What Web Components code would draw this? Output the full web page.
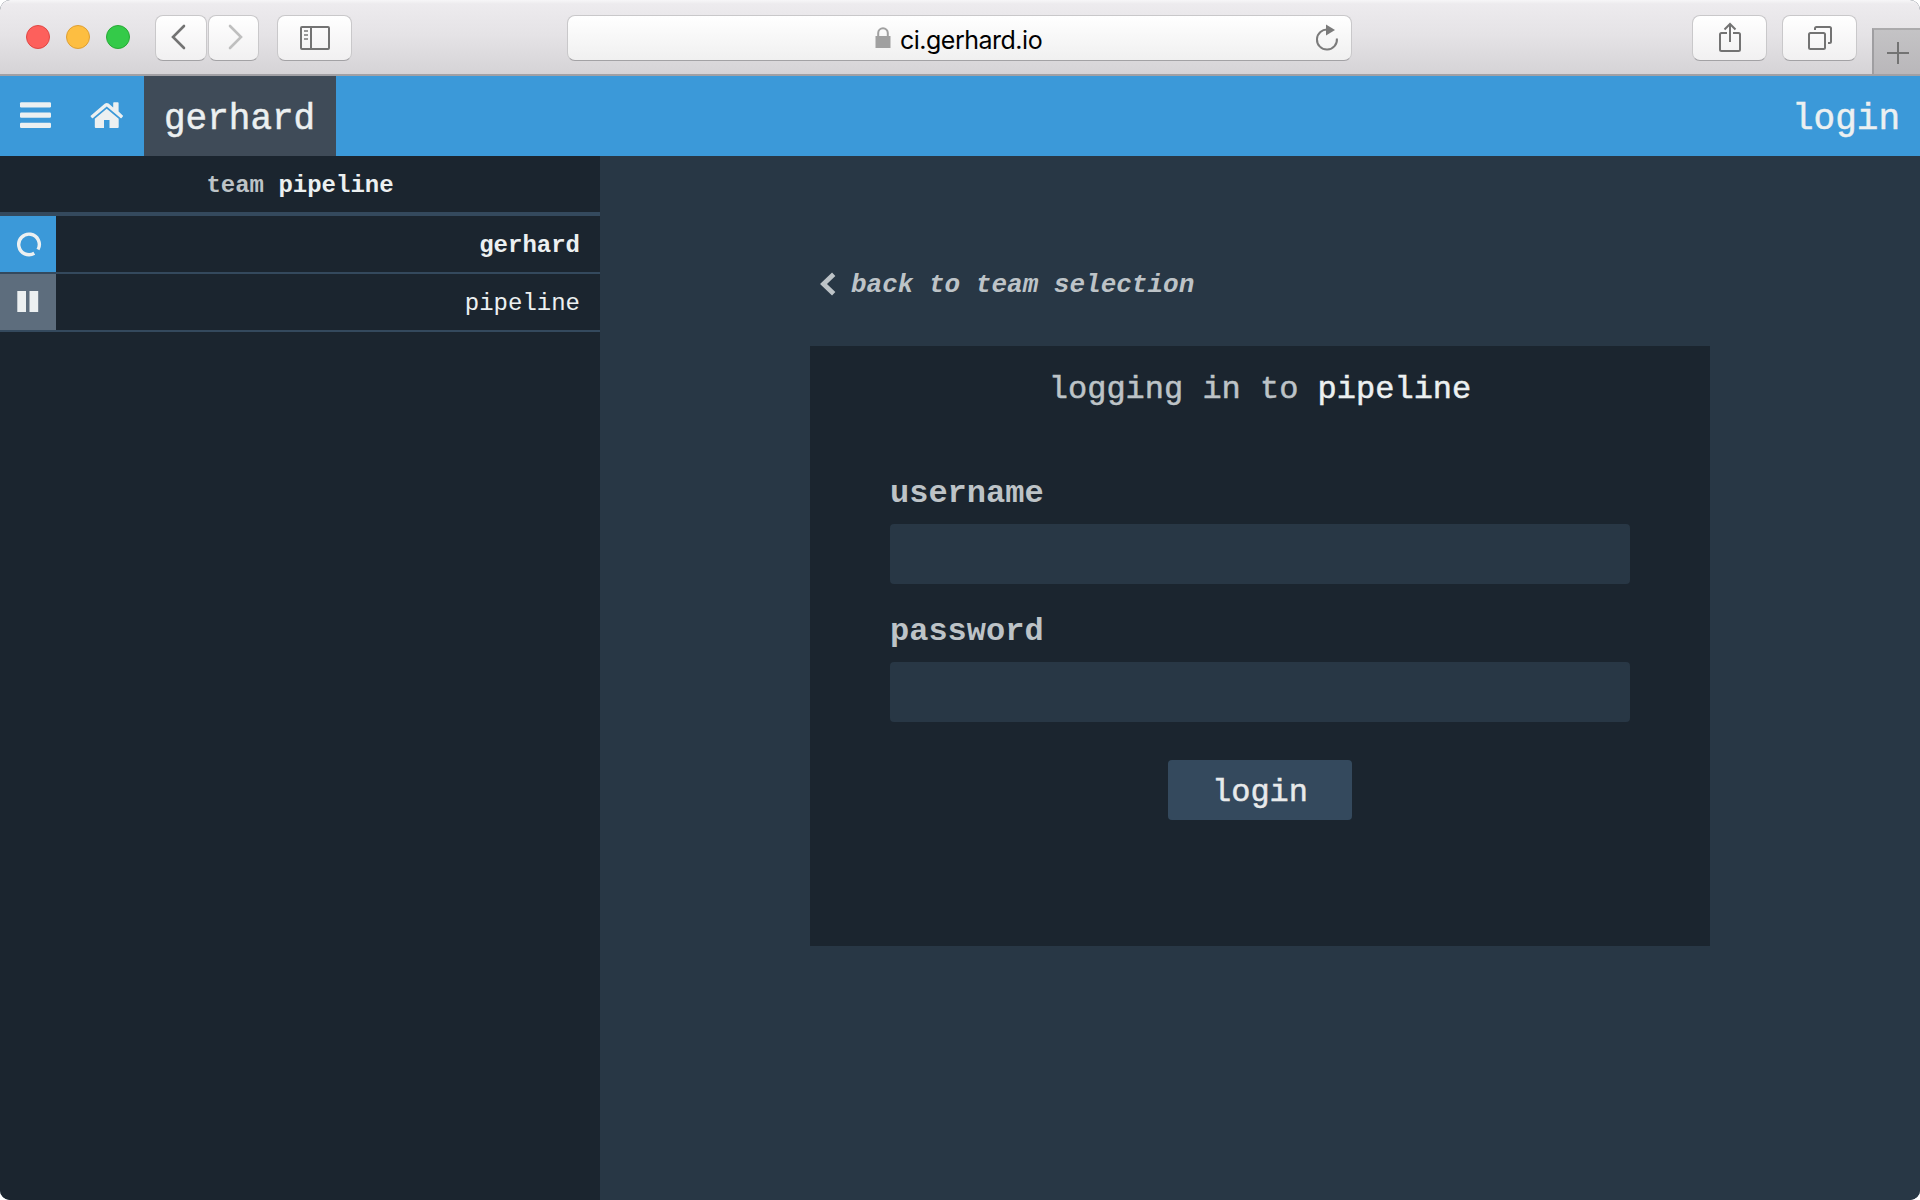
<!DOCTYPE html>
<html lang="en">
<head>
<meta charset="utf-8">
<title>ci.gerhard.io</title>
<style>
html,body{margin:0;height:100%;background:#fff;overflow:hidden}
body{font-family:"Liberation Mono",monospace;color:#ecf0f1}
</style>
</head>
<body>
<browser-window>
  <browser-toolbar slot="chrome" address="ci.gerhard.io"></browser-toolbar>
  <ci-topbar pipeline="gerhard"></ci-topbar>
  <ci-sidebar>
    <team-group name="pipeline">
      <pipeline-row state="running" current>gerhard</pipeline-row>
      <pipeline-row state="paused">pipeline</pipeline-row>
    </team-group>
  </ci-sidebar>
  <login-view team="pipeline"></login-view>
</browser-window>
<script>
const define = (name, render) => customElements.define(name, class extends HTMLElement {
  constructor() {
    super();
    this.attachShadow({ mode: 'open' });
  }
  connectedCallback() {
    this.shadowRoot.innerHTML = '<style>*{box-sizing:border-box}</style>' + render(this);
  }
});

define('browser-window', () => `
<style>
:host{display:grid;width:1920px;height:1200px;grid-template:76px 80px 1fr / 600px 1fr;border-radius:10px;overflow:hidden;background:#283745}
slot[name=chrome]::slotted(*){grid-column:1/3}
::slotted(ci-topbar){grid-column:1/3}
</style><slot name="chrome"></slot><slot></slot>`);

define('chrome-button', el => `
<style>
:host{display:flex;flex:none;box-sizing:border-box;width:${el.getAttribute('width')}px;height:46px;border:1px solid #c9c8ca;border-bottom-color:#a3a2a5;border-radius:8px;background:linear-gradient(#fff,#f1f0f1);align-items:center;justify-content:center}
</style><slot></slot>`);

define('address-field', () => `
<style>
:host{display:flex;flex:none;box-sizing:border-box;width:785px;height:46px;border:1px solid #c9c8ca;border-bottom-color:#a3a2a5;border-radius:8px;background:linear-gradient(#fff,#f0f0f0);align-items:center;padding:0 11px 0 307px;color:#000}
.url{flex:1;margin-left:9px;font:25px/43px Inter,sans-serif;letter-spacing:-.5px;padding-top:3px;height:44px}
svg{display:block;flex:none}
</style>
<svg width="16" height="22" viewBox="0 0 16 22"><path d="M3.200 10V6a4.800 4.800 0 0 1 9.600 0v4" fill="none" stroke="#a0a0a0" stroke-width="2"/><path d="M.5 9h15v12H.5z" fill="#a0a0a0"/></svg>
<span class="url"><slot></slot></span>
<svg width="26" height="30" viewBox="0 0 26 30"><path d="M22.900 15.500A10 10 0 1 1 14 6.600" fill="none" stroke="#7b7b7b" stroke-width="2"/><path d="M12 1.500 21 7l-9 5.500z" fill="#7b7b7b"/></svg>`);

define('browser-toolbar', el => `
<style>
:host{display:flex;height:76px;background:linear-gradient(#f7f6f8 0,#edebee 4px,#e5e3e6 35px,#d5d3d6 74px);border-bottom:2px solid #a1a0a4;box-sizing:border-box;padding:15px 0 0 26px;align-items:flex-start}
.lights{display:flex;flex:none;gap:16px;margin:10px 25px 0 0}
.lights i{width:24px;height:24px;border-radius:50%;border:1px solid #df4744;background:#fd605c}
.lights i+i{border-color:#de9f34;background:#fdbe41}
.lights i+i+i{border-color:#28a936;background:#34ca49}
.history{display:flex;gap:1px;margin-right:18px}
address-field{margin:0 340px 0 215px}
.right{display:flex;gap:15px}
.plus{display:flex;flex:none;width:48px;height:46px;margin:13px 0 0 15px;border-left:2px solid #9f9ea1;border-top:2px solid #abaaac;background:linear-gradient(#c4c3c5,#b9b7ba);align-items:center;justify-content:center}
svg{display:block;fill:none;stroke:#737373;stroke-width:2}
</style>
<div class="lights"><i></i><i></i><i></i></div>
<div class="history">
<chrome-button width="52"><svg width="16" height="26" viewBox="0 0 16 26" style="stroke-width:2.6;margin:0 6px 2px 0"><path d="M14 2 3 13l11 11" stroke-linecap="round"/></svg></chrome-button>
<chrome-button width="51"><svg width="16" height="26" viewBox="0 0 16 26" style="stroke-width:2.6;stroke:#bfbfbf;margin:0 0 2px 4px"><path d="m2 2 11 11L2 24" stroke-linecap="round"/></svg></chrome-button>
</div>
<chrome-button width="75"><svg width="30" height="24" viewBox="0 0 30 24"><rect x="1" y="1" width="28" height="22" rx="1"/><path d="M11 1v22"/><path d="M4 5h4M4 9h4M4 13h4" stroke="#999"/></svg></chrome-button>
<address-field>${el.getAttribute('address')}</address-field>
<div class="right">
<chrome-button width="75"><svg width="22" height="30" viewBox="0 0 22 30" style="margin-bottom:2px"><path d="M8 11H2.500Q1 11 1 12.500v15Q1 29 2.500 29h17q1.500 0 1.500-1.500v-15Q21 11 19.500 11H14M11 20V2M5.500 7.500 11 2l5.500 5.500"/></svg></chrome-button>
<chrome-button width="75"><svg width="24" height="24" viewBox="0 0 24 24"><rect x="1" y="7" width="16" height="16" rx="1.500"/><path d="M7 4V2.500Q7 1 8.500 1h13Q23 1 23 2.500v13Q23 17 21.500 17H20"/></svg></chrome-button>
</div>
<div class="plus"><svg width="22" height="22" viewBox="0 0 22 22" style="margin:2px 0 0 2px"><path d="M11 0v22M0 11h22"/></svg></div>`);

define('ci-topbar', el => `
<style>
:host{display:flex;height:80px;background:#3b99d9;font-size:36px;line-height:87px;-webkit-text-stroke:.5px}
.icon{display:flex;width:72px;height:80px}
.icon svg{display:block;fill:#ecf0f1}
.tab{background:#3f4b58;padding:0 20px;height:80px;width:192px}
.login{margin-left:auto;padding-right:20px}
</style>
<span class="icon"><svg width="72" height="80" viewBox="0 0 72 80"><rect x="20" y="26.300" width="31" height="5.200" rx="1.200"/><rect x="20" y="36.500" width="31" height="5.200" rx="1.200"/><rect x="20" y="46.700" width="31" height="5.200" rx="1.200"/></svg></span>
<span class="icon"><svg width="72" height="80" viewBox="0 0 72 80"><path d="m34.700 32.700 12 10V51q0 1-1 1H37.500v-8h-5.500v8h-8.200q-1 0-1-1v-8.300z"/><path d="M18.700 39.700 33 27.600q1.800-1.400 3.600 0l4.600 3.900v-4.400q0-.8.800-.8h3.800q.8 0 .8.800v8.500l4.200 3.900q.6.500 0 1.100l-1.200 1.300q-.5.500-1.100 0L34.800 30.500 21 41.900q-.6.500-1.100 0l-1.200-1.300q-.5-.5 0-.9z"/></svg></span>
<span class="tab">${el.getAttribute('pipeline')}</span><span class="login">login</span>`);

define('ci-sidebar', () => `<style>:host{display:block;background:#1b252f}</style><slot></slot>`);

define('team-group', el => `
<style>
:host{display:block;font-size:24px}
h2{margin:0;height:60px;border-bottom:4px solid #34495d;font:bold 24px/59px "Liberation Mono",monospace;text-align:center;color:#bdc3c7}
b{color:#ecf0f1}
</style><h2>team <b>${el.getAttribute('name')}</b></h2><slot></slot>`);

define('pipeline-row', el => `
<style>
:host{display:flex;box-sizing:border-box;height:58px;border-bottom:2px solid #34495d;font-size:24px;line-height:59px;justify-content:space-between;padding-right:20px}
:host([current]){font-weight:bold}
.state{width:56px;height:56px;background:#3b99d9}
:host([state=paused]) .state{background:#5d6d7d}
svg{display:block}
</style><span class="state"><svg width="56" height="56" viewBox="0 0 56 56">${
  el.getAttribute('state') === 'running'
    ? '<path d="M34.300 37.300A10.300 10.300 0 1 1 38 33.500" fill="none" stroke="#ecf0f1" stroke-width="3.400"/>'
    : '<path d="M17.300 17H26v21h-8.700zM29.500 17h8.700v21h-8.700z" fill="#ecf0f1"/>'
}</svg></span><slot></slot>`);

define('login-field', el => `
<style>
:host{display:block}
label{display:block;font:bold 32px/40px "Liberation Mono",monospace;color:#bdc3c7;height:50px}
input{display:block;width:740px;height:60px;border:0;border-radius:4px;background:#283745;margin:0 0 28px;padding:0 16px;font:32px "Liberation Mono",monospace;color:#ecf0f1;outline:0}
</style><label>${el.getAttribute('label')}</label><input aria-label="${el.getAttribute('label')}" type="${el.getAttribute('type')}">`);

define('login-view', el => `
<style>
:host{display:flex;flex-direction:column;background:#283745;padding:107px 0 0 210px}
.back{display:flex;height:83px;font:italic bold 26px/44px "Liberation Mono",monospace;color:#bdc3c7}
.back svg{display:block;margin:9px 15px 0 10px;width:16px;height:24px;flex:none;fill:none;stroke:#bdc3c7;stroke-width:4.800}
.panel{width:900px;height:600px;background:#1b252f;padding:0 80px}
h1{margin:0;height:128px;font:32px/88px "Liberation Mono",monospace;text-align:center;color:#bdc3c7;-webkit-text-stroke:.5px}
h1 b{font-weight:normal;color:#ecf0f1}
button{display:block;margin:38px auto 0;width:184px;height:60px;border:0;border-radius:4px;background:#34495d;color:#e8eaeb;font:32px/60px "Liberation Mono",monospace;padding:3px 0 0;-webkit-text-stroke:.5px}
</style>
<div class="back"><svg viewBox="0 0 16 24"><path d="M13.700 2.200 3.500 12l10.200 9.800"/></svg><span>back to team selection</span></div>
<div class="panel"><h1>logging in to <b>${el.getAttribute('team')}</b></h1>
<login-field label="username" type="text"></login-field>
<login-field label="password" type="password"></login-field>
<button>login</button></div>`);
</script>
</body>
</html>
